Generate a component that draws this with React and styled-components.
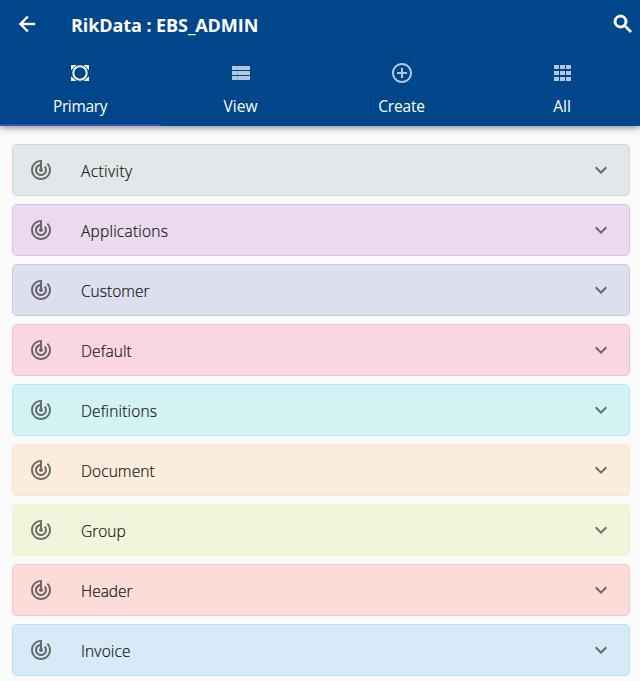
import React from "react";
import styled, { createGlobalStyle } from "styled-components";
import { MdArrowBack, MdSearch, MdAddCircleOutline, MdTrackChanges, MdExpandMore } from "react-icons/md";

const GlobalStyle = createGlobalStyle`
  * { box-sizing: border-box; }
  body { margin: 0; background: #fafafa; font-family: "Open Sans", "Noto Sans", sans-serif; overflow: hidden; }
`;

const Header = styled.header`
  height: 126px;
  background: #00468b;
  color: #fff;
  box-shadow: 0 2px 4px -1px rgba(0,0,0,.2), 0 4px 5px rgba(0,0,0,.14), 0 1px 10px rgba(0,0,0,.12);
`;

const Toolbar = styled.div`
  display: flex;
  align-items: center;
  height: 48px;
  padding: 0 5px 0 15px;
  svg { display: block; flex: none; }
  path:last-child { stroke: currentColor; stroke-width: 0.4px; }
  svg:last-child path:last-child { stroke-width: 0.9px; }
`;

const Title = styled.h1`
  flex: 1;
  margin: 2px 0 0 32px;
  font-size: 18px;
  line-height: 24px;
  font-weight: 700;
  letter-spacing: -0.08px;
`;

const Tabs = styled.nav`
  display: grid;
  grid-template-columns: 160px 161px 161px 160px;
  height: 78px;
`;

const Tab = styled.div`
  display: flex;
  flex-direction: column;
  align-items: center;
  padding-top: 13px;
  border-bottom: 2px solid ${(p) => (p.$active ? "#3f51b5" : "transparent")};
  svg { display: block; opacity: ${(p) => (p.$active ? 0.95 : 0.7)}; }
`;

const TabLabel = styled.span`
  margin-top: 9px;
  font-size: 15.5px;
  line-height: 24px;
  letter-spacing: ${(p) => p.$spacing}px;
`;

const List = styled.main`
  display: flex;
  flex-direction: column;
  gap: 8px;
  padding: 18px 10px 0 12px;
`;

const Card = styled.section`
  display: flex;
  align-items: center;
  height: 52px;
  padding: 0 16px;
  background: ${(p) => p.$fill};
  border: 1px solid ${(p) => p.$line};
  border-radius: 5px;
  svg { display: block; flex: none; color: rgba(0,0,0,.54); }
`;

const Name = styled.span`
  flex: 1;
  margin: 2px 0 0 28px;
  font-size: 15.5px;
  line-height: 24px;
  font-weight: 300;
  color: #141414;
  -webkit-text-stroke: 0.2px #141414;
  letter-spacing: ${(p) => p.$spacing}px;
`;

const PrimaryIcon = () => (
  <svg width="24" height="24" viewBox="0 0 24 24" fill="currentColor">
    <circle cx="12" cy="12" r="6.7" fill="none" stroke="currentColor" strokeWidth="2" />
    <path d="M3 4h5.5L3 9.2zM21 4h-5.5L21 9.2zM3 20h5.5L3 15.2zM21 20h-5.5L21 15.2z" />
  </svg>
);

const ViewIcon = () => (
  <svg width="24" height="24" viewBox="0 0 24 24" fill="currentColor">
    <path d="M3 5h5v4H3zM8.2 5H21v4H8.2zM3 10h5v4H3zM8.2 10H21v4H8.2zM3 15h5v4H3zM8.2 15H21v4H8.2z" />
  </svg>
);

const GridIcon = () => (
  <svg width="24" height="24" viewBox="0 0 24 24" fill="currentColor" shapeRendering="crispEdges">
    {[4, 10, 16].map((y) => [4, 10, 16].map((x) => <rect key={`${x}-${y}`} x={x} y={y} width="5" height="4" />))}
  </svg>
);

const tabs = [
  { label: "Primary", icon: <PrimaryIcon />, active: true, spacing: -0.35 },
  { label: "View", icon: <ViewIcon />, spacing: 0 },
  { label: "Create", icon: <MdAddCircleOutline size={24} />, spacing: -0.2 },
  { label: "All", icon: <GridIcon />, spacing: 0 },
];

const groups = [
  ["Activity", "#e2e8ea", "#cfd8dc", 0.4],
  ["Applications", "#ebdaed", "#e1bee7", 0.22],
  ["Customer", "#dddfee", "#c5cae9", 0],
  ["Default", "#f8d7e2", "#f8bbd0", 0.1],
  ["Definitions", "#d4f2f4", "#b2ebf2", 0.15],
  ["Document", "#fbecdb", "#ffe4c3", 0.08],
  ["Group", "#f2f5dc", "#edf3c3", 0],
  ["Header", "#faddd9", "#ffc5bd", 0],
  ["Invoice", "#d7eaf8", "#bbdefb", 0.15],
];

export default function App() {
  return (
    <>
      <GlobalStyle />
      <Header>
        <Toolbar>
          <MdArrowBack size={24} />
          <Title>RikData : EBS_ADMIN</Title>
          <MdSearch size={24} />
        </Toolbar>
        <Tabs>
          {tabs.map((t) => (
            <Tab key={t.label} $active={t.active}>
              {t.icon}
              <TabLabel $spacing={t.spacing}>{t.label}</TabLabel>
            </Tab>
          ))}
        </Tabs>
      </Header>
      <List>
        {groups.map(([name, fill, line, spacing]) => (
          <Card key={name} $fill={fill} $line={line}>
            <MdTrackChanges size={24} />
            <Name $spacing={spacing}>{name}</Name>
            <MdExpandMore size={24} />
          </Card>
        ))}
      </List>
    </>
  );
}
